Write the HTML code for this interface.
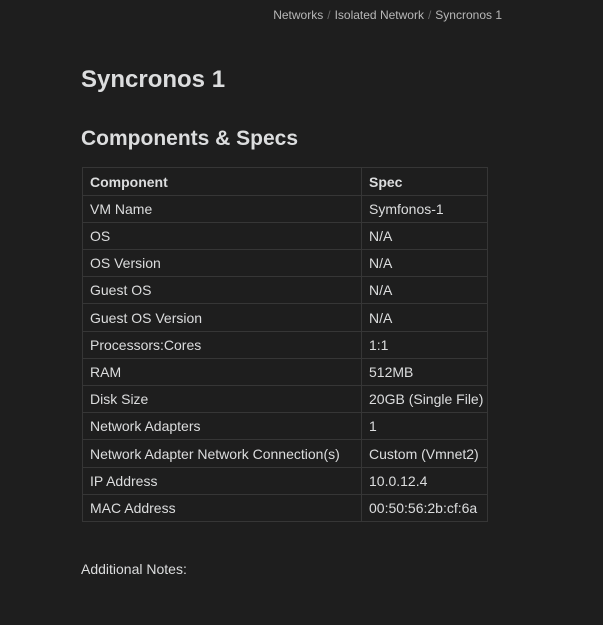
<!DOCTYPE html>
<html><head><style>
html,body{margin:0;padding:0;background:#1e1e1e;width:603px;height:625px;overflow:hidden;font-family:"Liberation Sans",sans-serif;color:#dcddde}
.bc{position:absolute;top:8px;right:101px;font-size:12px;color:#b8b8b8}
.bc span{color:#666;margin:0 4px}
h1{position:absolute;left:81px;top:64px;margin:0;font-size:24px;font-weight:bold;line-height:32px}
h2{position:absolute;left:81px;top:124px;margin:0;font-size:21px;font-weight:bold;line-height:30px}
table{position:absolute;left:82px;top:167px;border-collapse:collapse;font-size:14px;table-layout:fixed;width:405px}
td,th{border:1px solid #363636;height:27px;padding:0 7px;text-align:left;box-sizing:border-box;white-space:nowrap;overflow:hidden}
th{font-weight:bold;height:28px}
tr:nth-child(6) td,tr:nth-child(11) td{height:28px}
td:first-child,th:first-child{width:279px}
td:last-child,th:last-child{width:126px}
.n{position:absolute;left:81px;top:561px;font-size:14px}
</style></head><body>
<div class="bc">Networks<span>/</span>Isolated Network<span>/</span>Syncronos 1</div>
<h1>Syncronos 1</h1>
<h2>Components &amp; Specs</h2>
<table>
<tr><th>Component</th><th>Spec</th></tr>
<tr><td>VM Name</td><td>Symfonos-1</td></tr>
<tr><td>OS</td><td>N/A</td></tr>
<tr><td>OS Version</td><td>N/A</td></tr>
<tr><td>Guest OS</td><td>N/A</td></tr>
<tr><td>Guest OS Version</td><td>N/A</td></tr>
<tr><td>Processors:Cores</td><td>1:1</td></tr>
<tr><td>RAM</td><td>512MB</td></tr>
<tr><td>Disk Size</td><td>20GB (Single File)</td></tr>
<tr><td>Network Adapters</td><td>1</td></tr>
<tr><td>Network Adapter Network Connection(s)</td><td>Custom (Vmnet2)</td></tr>
<tr><td>IP Address</td><td>10.0.12.4</td></tr>
<tr><td>MAC Address</td><td>00:50:56:2b:cf:6a</td></tr>
</table>
<div class="n">Additional Notes:</div>
</body></html>
